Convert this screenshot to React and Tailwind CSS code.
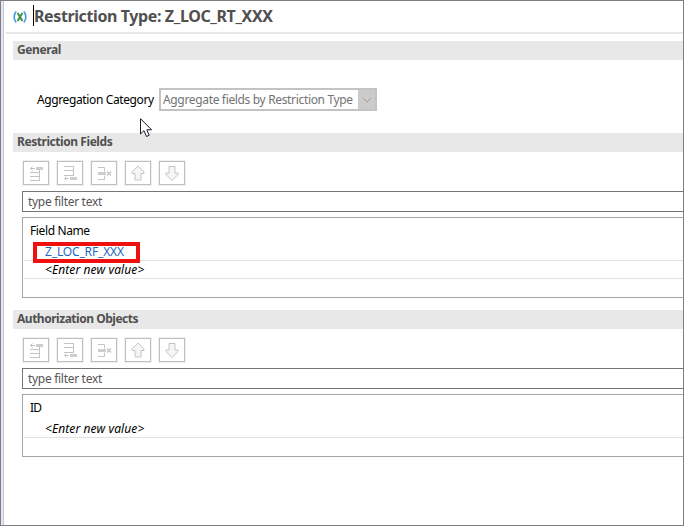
const ICONS = {
  before: (
    <g stroke="#c4c4c4" fill="none">
      <path d="M8.500 8.500H13M10.500 6.500l-2 2 2 2M17.500 10v11M8 12.500h9M8 16.500h9M8 20.500h10" />
      <path d="M14 7h7v3h-7z" fill="#cecece" stroke="none" />
    </g>
  ),
  after: (
    <g stroke="#c4c4c4" fill="none">
      <path d="M17.500 6v10M8 6.500h10M8 10.500h9M8 15.500h10M8.500 18.500H13M10.500 16.500l-2 2 2 2" />
      <path d="M14 17h7v3h-7z" fill="#cecece" stroke="none" />
    </g>
  ),
  remove: (
    <g stroke="#c4c4c4" fill="none">
      <path d="M8 7.500h6.500v4M8 19.500h6.500v-4" />
      <path d="M8 12h8v3h-8z" fill="#cecece" stroke="none" />
      <path d="M17 11.500l4 4M21 11.500l-4 4" strokeWidth="1.3" />
    </g>
  ),
  up: <path d="M14 6l6 6v1.500h-3v6.500h-6v-6.500H8V12z" fill="#f5f5f5" stroke="#c4c4c4" strokeLinejoin="round" />,
  down: <path d="M14 20.500l6-6V13h-3V6.500h-6V13H8v1.500z" fill="#f5f5f5" stroke="#c4c4c4" strokeLinejoin="round" />,
};

function Toolbar() {
  return (
    <div className="ml-[18px] mt-2 flex h-[26px] gap-1.5">
      {Object.keys(ICONS).map((name) => (
        <button key={name} aria-label={name} className="h-[26px] w-7 bg-[#f0f0f0] p-px">
          <span className="flex h-6 w-[26px] items-center justify-center border border-[#bfbfbf] bg-white">
            <svg width="28" height="26" viewBox="0 0 28 26" className="shrink-0">{ICONS[name]}</svg>
          </span>
        </button>
      ))}
    </div>
  );
}

function Heading({ children, spacing }) {
  return (
    <h2 className={"ml-[9px] flex h-[19px] items-start bg-[#e8e8e8] pl-1 text-[12px] leading-[17px] font-bold text-[#505050] " + spacing}>
      {children}
    </h2>
  );
}

function Filter() {
  return (
    <div className="ml-[18px] mt-[5px] flex h-[21px] items-center border border-r-0 border-[#757575] pl-[5px] text-[12px] tracking-[-0.3px] text-[#555]">
      type filter text
    </div>
  );
}

function NewValue() {
  return <span className="text-[12px] tracking-[0.1px] text-black italic">&lt;Enter new value&gt;</span>;
}

export default function App() {
  return (
    <div className="flex h-[526px] w-[684px] overflow-hidden border border-[#7f7f7f] bg-white font-['Noto_Sans',sans-serif] whitespace-nowrap">
      <div className="w-[3px] shrink-0 border-r border-[#c9c9cf] bg-[#e4e4f4]" />
      <main className="relative min-w-0 flex-1">
        <header className="ml-0.5 flex h-[33px] items-start border-b-2 border-[#e8e8e8]">
          <svg width="14" height="12" viewBox="0 0 14 12" className="mt-[10px] ml-[7px]" fill="none">
            <path d="M3.200.5C.5 3.500.5 8.500 3.200 11.500M10.800.5c2.700 3 2.700 8 0 11" stroke="#4097d8" strokeWidth="1.600" />
            <path d="M4.600 2l4.800 8M9.400 2l-4.800 8" stroke="#3f9147" strokeWidth="2" />
          </svg>
          <span className="mt-1 ml-[6px] h-[21px] w-px bg-black" />
          <h1 className="mt-[4px] text-[16px] leading-[22px] font-bold tracking-[-0.39px] text-[#505050]">Restriction Type: Z_LOC_RT_XXX</h1>
        </header>

        <section className="mt-[7px] h-[92px]">
          <Heading spacing="tracking-[-0.38px]">General</Heading>
          <div className="mt-7 ml-[33px] flex h-[23px] items-center">
            <label className="w-[122px] shrink-0 text-[12px] tracking-[-0.38px] text-black">Aggregation Category</label>
            <div className="flex h-[23px] w-[218px] items-center border-2 border-[#c3c3c3]">
              <span className="w-[197px] shrink-0 pl-[2px] text-[12px] tracking-[-0.34px] text-[#737373]">Aggregate fields by Restriction Type</span>
              <span className="flex h-full flex-1 items-center justify-center bg-[#cbcbcb]">
                <svg width="10" height="6" viewBox="0 0 10 6" fill="none" stroke="#9c9c9c"><path d="M1 1l4 4 4-4" /></svg>
              </span>
            </div>
          </div>
        </section>

        <section className="h-[177px]">
          <Heading spacing="tracking-[-0.44px]">Restriction Fields</Heading>
          <Toolbar />
          <Filter />
          <div className="mt-[5px] ml-[18px] h-[81px] border border-r-0 border-[#a5a5aa] pl-px">
            <div className="flex h-[23px] items-end pl-1.5 text-[12px] leading-[20px] tracking-[-0.38px] text-black">Field Name</div>
            <div className="flex h-[20px] items-start border-b border-[#e1e1e1] pl-[9px]">
              <div className="z-10 mt-px flex h-[21px] w-[107px] shrink-0 items-start border-4 border-[#ef1010] bg-white pl-2 text-[12px] leading-[12px] tracking-[-0.15px] text-[#1d67c5]">Z_LOC_RF_XXX</div>
            </div>
            <div className="flex h-[18px] items-center border-b border-[#e1e1e1] pl-[21px]"><NewValue /></div>
          </div>
        </section>

        <section>
          <Heading spacing="tracking-[-0.48px]">Authorization Objects</Heading>
          <Toolbar />
          <Filter />
          <div className="mt-[5px] ml-[18px] h-[63px] border border-r-0 border-[#a5a5aa] pl-px">
            <div className="flex h-[23px] items-end pl-1.5 text-[12px] leading-[20px] tracking-[-0.7px] text-black">ID</div>
            <div className="flex h-[20px] items-end border-b border-[#e1e1e1] pl-[21px] leading-[16px]"><NewValue /></div>
          </div>
        </section>

        <svg className="absolute top-[117px] left-[136px]" width="13" height="20" viewBox="0 0 13 20">
          <path d="M.5.700v15.300l3.500-3.300 2.500 5.800 2.700-1.200-2.400-5.500h4.800z" fill="white" stroke="#1b1b2a" />
        </svg>
      </main>
    </div>
  );
}
